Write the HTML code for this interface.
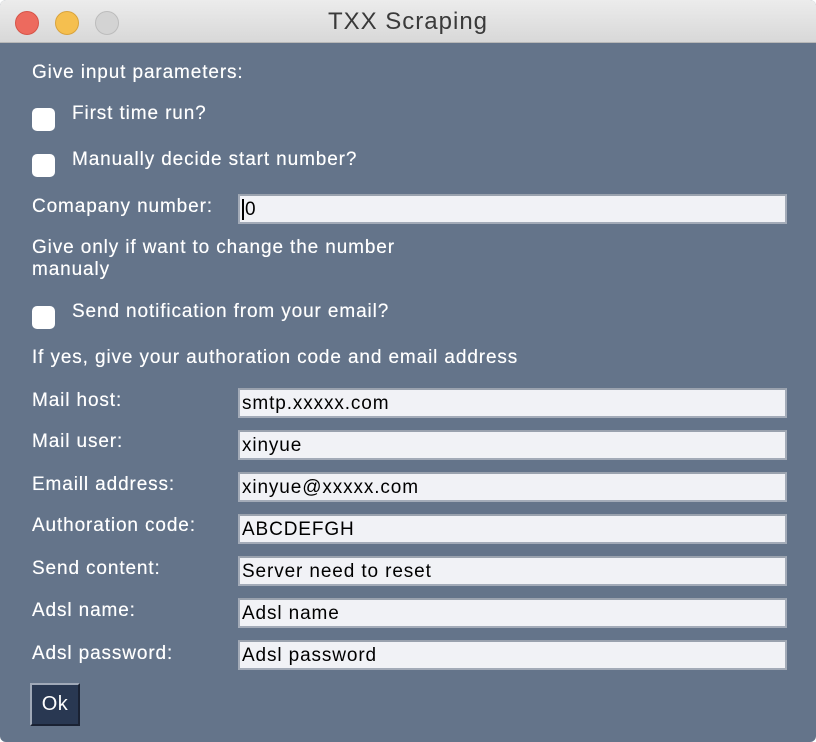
<!DOCTYPE html>
<html><head><meta charset="utf-8"><style>
*{margin:0;padding:0;box-sizing:border-box}
body{width:816px;height:742px;background:#fff;font-family:"Liberation Sans",Arial,sans-serif;overflow:hidden;position:relative}
.win{position:absolute;left:0;top:0;width:816px;height:742px;background:#64748a;border-radius:6px;overflow:hidden}
.title{position:absolute;left:0;top:0;width:816px;height:43px;background:linear-gradient(#ececec,#d8d8d8);border-bottom:1px solid #b8b8b8;text-align:center;font-size:24px;letter-spacing:1px;line-height:43px;color:#3a3a3a}
.dot{position:absolute;top:11px;width:24px;height:24px;border-radius:50%}
.t{position:absolute;color:#fff;font-size:19px;letter-spacing:0.88px;line-height:22px;white-space:nowrap;text-shadow:0 0 0.4px #fff;margin-top:1px}
.cb{position:absolute;left:32px;width:23px;height:23px;background:#fff;border-radius:5px}
.in{position:absolute;left:238px;width:549px;height:30px;background:#f1f2f6;border:2px solid #a3abb8;border-top-color:#9aa2ae;color:#000;font-size:19px;letter-spacing:0.88px;line-height:28px;padding-left:2px}
.ok{position:absolute;left:30px;top:683px;width:50px;height:43px;background:#293852;border:2px solid #a0a9b8;border-right-color:#1a2233;border-bottom-color:#1a2233;color:#fff;font-size:20px;letter-spacing:0.5px;line-height:38px;text-align:center}
</style></head><body>
<div class="win">
<div class="title">TXX Scraping</div>
<div class="dot" style="left:15px;background:#ed6a5e;border:1px solid #d65448"></div>
<div class="dot" style="left:55px;background:#f5bf4f;border:1px solid #d9a33c"></div>
<div class="dot" style="left:95px;background:#d3d3d3;border:1px solid #bcbcbc"></div>

<div class="t" style="left:32px;top:61px">Give input parameters:</div>
<div class="cb" style="top:108px"></div>
<div class="t" style="left:72px;top:102px">First time run?</div>
<div class="cb" style="top:154px"></div>
<div class="t" style="left:72px;top:148px">Manually decide start number?</div>
<div class="t" style="left:32px;top:195px">Comapany number:</div>
<div class="in" style="top:194px;height:30px"><span style="border-left:2px solid #000;padding-left:1px">0</span></div>
<div class="t" style="left:32px;top:236px">Give only if want to change the number</div>
<div class="t" style="left:32px;top:258px">manualy</div>
<div class="cb" style="top:306px"></div>
<div class="t" style="left:72px;top:300px">Send notification from your email?</div>
<div class="t" style="left:32px;top:346px">If yes, give your authoration code and email address</div>

<div class="t" style="left:32px;top:389px">Mail host:</div>
<div class="in" style="top:388px">smtp.xxxxx.com</div>
<div class="t" style="left:32px;top:430px">Mail user:</div>
<div class="in" style="top:430px">xinyue</div>
<div class="t" style="left:32px;top:473px">Emaill address:</div>
<div class="in" style="top:472px">xinyue@xxxxx.com</div>
<div class="t" style="left:32px;top:514px">Authoration code:</div>
<div class="in" style="top:514px">ABCDEFGH</div>
<div class="t" style="left:32px;top:557px">Send content:</div>
<div class="in" style="top:556px">Server need to reset</div>
<div class="t" style="left:32px;top:599px">Adsl name:</div>
<div class="in" style="top:598px">Adsl name</div>
<div class="t" style="left:32px;top:642px">Adsl password:</div>
<div class="in" style="top:640px">Adsl password</div>

<div class="ok">Ok</div>
</div>
</body></html>
